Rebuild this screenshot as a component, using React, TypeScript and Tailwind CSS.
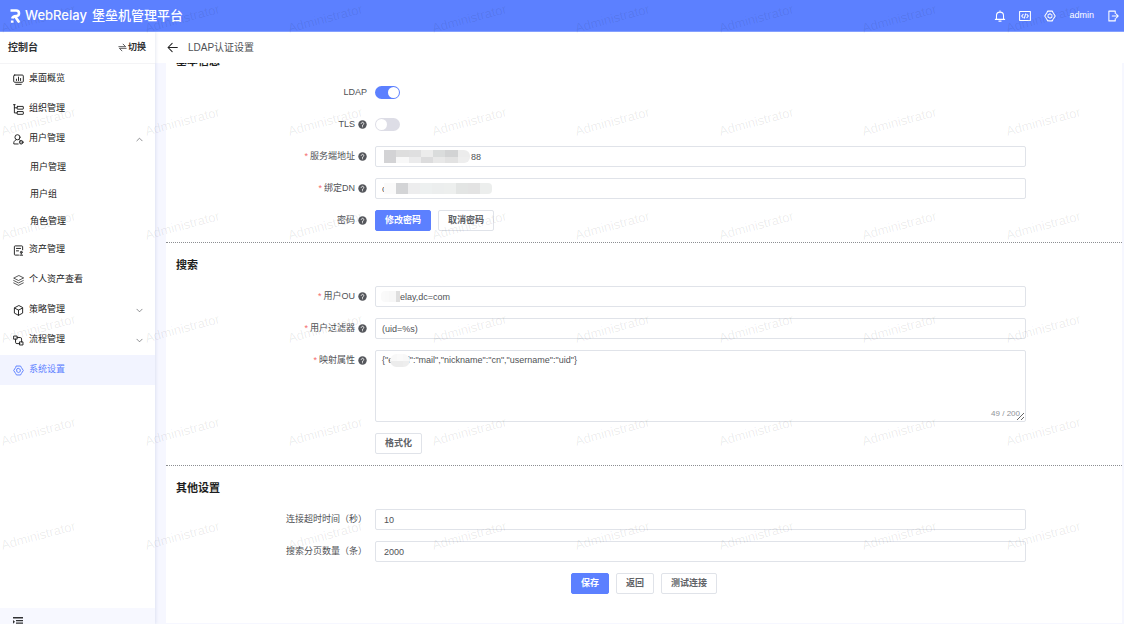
import { useState, type ReactNode } from "react";
import clsx from "clsx";

const Icon = ({ children, className = "size-[11px]" }: { children: ReactNode; className?: string }) => (
  <svg
    viewBox="0 0 16 16"
    fill="none"
    stroke="currentColor"
    strokeWidth="1.4"
    strokeLinecap="round"
    strokeLinejoin="round"
    className={clsx("shrink-0", className)}
    aria-hidden="true"
  >
    {children}
  </svg>
);

const icons = {
  desktop: (
    <Icon>
      <rect x="1" y="1.5" width="14" height="10.5" rx="1.5" />
      <path d="M4 15h8M5 9.5V7.5M8 9.5V4.5M11 9.5V6.5" />
    </Icon>
  ),
  org: (
    <Icon>
      <path d="M2 1v12h4M0.800 1h2.400M2 5.500h4" />
      <rect x="6" y="3.500" width="9" height="4" rx="0.500" />
      <rect x="6" y="11" width="9" height="4" rx="0.500" />
    </Icon>
  ),
  user: (
    <Icon>
      <path d="M7.500 14.500H1.200c-.6-3 1-5.300 3.600-6.200M8.500 8.200c.8.2 1.500.5 2 1" />
      <circle cx="6.500" cy="4.700" r="3.700" />
      <circle cx="12" cy="12" r="2.600" fill="currentColor" fillOpacity="0.400" />
    </Icon>
  ),
  asset: (
    <Icon>
      <path d="M14 7V2.500a1.200 1.200 0 0 0-1.200-1.200H3.200A1.200 1.200 0 0 0 2 2.500v11a1.200 1.200 0 0 0 1.200 1.200H8M5 5h6M5 8.500h3" />
      <circle cx="12" cy="10.500" r="1.300" />
      <path d="M12 12v1.500M10 14.800h4" />
    </Icon>
  ),
  layers: (
    <Icon>
      <path d="M8 1 1 4.500 8 8l7-3.500zM1 8l7 3.500L15 8M1 11.500 8 15l7-3.500" strokeWidth="1.100" />
    </Icon>
  ),
  box: (
    <Icon>
      <path d="M8 1 2 4.200v7.600L8 15l6-3.200V4.200zM2.200 4.400 8 7.500l5.800-3.100M8 7.500V15" />
    </Icon>
  ),
  flow: (
    <Icon>
      <rect x="1.500" y="1.500" width="4.500" height="4.500" />
      <rect x="10" y="10" width="4.500" height="4.500" />
      <path d="M6 3.700h4.500a2 2 0 0 1 2 2V10M3.700 6v4.500a2 2 0 0 0 2 2H10" />
    </Icon>
  ),
  setting: (
    <Icon>
      <path d="M5 1.500h6l1.200 2.200L15 8l-2.800 4.300L11 14.500H5l-1.200-2.200L1 8l2.800-4.300z" />
      <path d="M8 5 10.600 6.500v3L8 11 5.400 9.500v-3z" />
    </Icon>
  ),
  bell: (
    <Icon className="size-3">
      <path d="M1.800 12.500h12.400M3.300 12.300V7.500a4.700 4.700 0 0 1 9.400 0v4.800M8 1v1.500M6.500 14.800h3" />
    </Icon>
  ),
  code: (
    <Icon className="size-3">
      <rect x="0.800" y="2" width="14.400" height="12" />
      <path d="M5.500 5.800 3.500 8l2 2.200M10.500 5.800l2 2.200-2 2.200M8.800 5.200l-1.600 5.600" />
    </Icon>
  ),
  logout: (
    <Icon className="size-3">
      <path d="M11 4.500V1.500H2.500v13H11v-3M7 8h8M12.500 5.500 15 8l-2.500 2.500" />
    </Icon>
  ),
};

type MenuItem = { label: string; icon: ReactNode; children?: string[]; arrow?: boolean; active?: boolean };

const menu: MenuItem[] = [
  { label: "桌面概览", icon: icons.desktop },
  { label: "组织管理", icon: icons.org },
  { label: "用户管理", icon: icons.user, arrow: true, children: ["用户管理", "用户组", "角色管理"] },
  { label: "资产管理", icon: icons.asset },
  { label: "个人资产查看", icon: icons.layers },
  { label: "策略管理", icon: icons.box, arrow: true },
  { label: "流程管理", icon: icons.flow, arrow: true },
  { label: "系统设置", icon: icons.setting, active: true },
];

const Header = () => (
  <header className="flex h-8 shrink-0 items-center border-b border-[#84a0ff] bg-[#5c80ff] pr-[5px] pl-[10px] text-white">
    <svg viewBox="0 0 11 14" className="h-[14px] w-[11px]" fill="none" stroke="white" strokeWidth="2.600" aria-hidden="true">
      <path d="M0.500 1.500H6.200a2.800 2.800 0 0 1 0 5.600C4 7.200 2.600 8 2.200 9.500" />
      <path d="M5.200 7.500 9.300 13.600M2.200 11.500v2.300" />
    </svg>
    <span className="ml-1 font-[Inter] text-[13px] font-medium">WebRelay</span>
    <h1 className="ml-[5px] text-[13px] font-medium">堡垒机管理平台</h1>
    <div className="ml-auto flex items-center gap-[13px]">
      <button aria-label="通知">{icons.bell}</button>
      <button aria-label="接口">{icons.code}</button>
      <button aria-label="设置" className="*:size-3">{icons.setting}</button>
      <span className="text-[9px]">admin</span>
      <button aria-label="退出">{icons.logout}</button>
    </div>
  </header>
);

const Sidebar = () => (
  <aside className="z-10 flex w-[155px] shrink-0 flex-col bg-white shadow-[1px_0_3px_rgba(60,80,160,0.12)]">
    <div className="flex h-8 shrink-0 items-center justify-between border-b border-[#f4f4f6] pr-[9px] pl-2">
      <span className="text-[10px] font-semibold text-[#303133]">控制台</span>
      <button className="flex items-center gap-px text-[9px] font-semibold text-[#303133]">
        <Icon className="size-[9px]">
          <path d="M1.500 6.500h12L9 2M14.500 9.500h-12L7 14" />
        </Icon>
        切换
      </button>
    </div>
    <nav className="flex-1 text-[9px] text-[#222]">
      <ul>
        {menu.map((item) => (
          <li key={item.label}>
            <a
              href="#"
              className={clsx(
                "flex h-[30px] items-center gap-[5px] pr-3 pl-[13px]",
                item.active && "bg-[#f2f4ff] text-[#5c80ff]",
              )}
            >
              {item.icon}
              <span>{item.label}</span>
              {item.arrow && (
                <Icon className="ml-auto size-[7px] text-[#606266]">
                  <path d={item.children ? "M2 11l6-6 6 6" : "M2 5l6 6 6-6"} strokeWidth="1.600" />
                </Icon>
              )}
            </a>
            {item.children && (
              <ul>
                {item.children.map((child) => (
                  <li key={child}>
                    <a href="#" className="flex h-[27px] items-center pl-[30px]">
                      {child}
                    </a>
                  </li>
                ))}
              </ul>
            )}
          </li>
        ))}
      </ul>
    </nav>
    <div className="h-4 shrink-0 overflow-hidden bg-[#f7f8ff] pt-2 pl-[13px]">
      <button aria-label="收起菜单" className="block">
        <svg viewBox="0 0 10 10" className="size-[10px]" fill="#303133" aria-hidden="true">
          <path d="M0 1h10v1.500H0zM3 4h7v1.200H3zM3 6.500h7v1.200H3zM0 9h10v1H0zM0 4l2 1.800L0 7.700z" />
        </svg>
      </button>
    </div>
  </aside>
);

const Button = ({ children, primary }: { children: ReactNode; primary?: boolean }) => (
  <button
    type="button"
    className={clsx(
      "h-[21px] rounded-[2px] border px-[9px] text-[9px] font-semibold",
      primary ? "border-[#5c80ff] bg-[#5c80ff] text-white" : "border-[#e0e3e9] bg-white text-[#606266]",
    )}
  >
    {children}
  </button>
);

const Help = () => (
  <svg viewBox="0 0 16 16" className="size-[9px]" aria-hidden="true">
    <circle cx="8" cy="8" r="7.500" fill="#55575c" />
    <path d="M5.700 6.300a2.300 2.300 0 1 1 3.500 2C8.300 8.800 8 9.100 8 10M8 11.800v.4" fill="none" stroke="white" strokeWidth="1.500" strokeLinecap="round" />
  </svg>
);

type RowProps = { label?: string; id?: string; required?: boolean; help?: boolean; children: ReactNode };

const Row = ({ label, id, required, help, children }: RowProps) => (
  <div className="flex items-start gap-2">
    <div className="flex h-[21px] w-[201px] shrink-0 items-center justify-end gap-[3px] text-[9px] text-[#505256]">
      {label && (
        <label htmlFor={id}>
          {required && <span className="mr-[2px] text-[#f56c6c]">*</span>}
          {label}
        </label>
      )}
      {help && <Help />}
    </div>
    <div className="relative flex min-h-[21px] min-w-0 flex-1 items-center gap-[7px]">{children}</div>
  </div>
);

const Toggle = ({ id, initial = false }: { id: string; initial?: boolean }) => {
  const [on, setOn] = useState(initial);
  return (
    <input
      id={id}
      type="checkbox"
      role="switch"
      checked={on}
      onChange={(e) => setOn(e.target.checked)}
      className="h-[13px] w-[25px] appearance-none rounded-full bg-[#dddde6] p-px before:block before:size-[11px] before:rounded-full before:bg-white checked:bg-[#5c80ff] checked:before:ml-3"
    />
  );
};

const TextField = ({ id, value, className = "px-[6px]" }: { id: string; value: string; className?: string }) => (
  <input
    id={id}
    type="text"
    defaultValue={value}
    className={clsx("h-[21px] w-full rounded-[2px] border border-[#e0e3e9] bg-white text-[9px] text-[#505256] outline-none", className)}
  />
);

const Mask = ({ rows, className }: { rows: string[][]; className: string }) => (
  <div className={clsx("absolute flex flex-col overflow-hidden", className)} aria-hidden="true">
    {rows.map((colors, r) => (
      <div key={r} className="flex flex-1">
        {colors.map((color, i) => (
          <span key={i} className="flex-1" style={{ background: color }} />
        ))}
      </div>
    ))}
  </div>
);

const Section = ({ title, children, divided }: { title: string; children: ReactNode; divided?: boolean }) => (
  <section className={clsx("pt-3 pb-[11px]", divided && "border-b border-dotted border-[#8c8e92]")}>
    <h2 className="mb-[11px] h-5 pl-[10px] text-[11px] leading-5 font-bold text-[#1d1e20]">{title}</h2>
    <div className="flex flex-col gap-[11px] pr-24">{children}</div>
  </section>
);

const Watermark = () => (
  <div className="pointer-events-none absolute inset-0 z-20 overflow-hidden" aria-hidden="true">
    <div className="-mt-[33px] grid h-[620px] w-[1148px] grid-cols-8 grid-rows-6">
      {Array.from({ length: 48 }, (_, i) => (
        <span key={i} className="flex items-center text-[13px] text-black/8">
          <span className="-rotate-[15deg]">Administrator</span>
        </span>
      ))}
    </div>
  </div>
);

const App = () => {
  return (
    <div className="relative flex h-screen flex-col overflow-hidden bg-[#f6f7ff] font-['Liberation_Sans','Noto_Sans_CJK_SC',sans-serif]">
      <Header />
      <div className="flex min-h-0 flex-1">
        <Sidebar />
        <main className="flex min-w-0 flex-1 flex-col">
          <div className="flex h-[31px] shrink-0 items-center gap-[10px] bg-white pl-3">
            <button aria-label="返回上一页">
              <Icon className="size-[11px] text-[#222]">
                <path d="M15 8H1.500M7.500 2l-6 6 6 6" strokeWidth="1.500" />
              </Icon>
            </button>
            <span className="text-[10px] text-[#505256]">LDAP认证设置</span>
          </div>
          <div className="mr-[2px] mb-px ml-[11px] flex-1 overflow-hidden bg-white">
            <form className="-mt-6">
              <Section title="基本信息" divided>
                <Row label="LDAP" id="ldap">
                  <Toggle id="ldap" initial />
                </Row>
                <Row label="TLS" id="tls" help>
                  <Toggle id="tls" />
                </Row>
                <Row label="服务端地址" id="server" required help>
                  <TextField id="server" value="88" className="pr-[6px] pl-[95px]" />
                  <Mask
                    className="top-1 left-[9px] h-[13px] w-[86px] rounded-r-md"
                    rows={[
                      ["#d3d3d5", "#dedede", "#dfdfe0", "#ececec", "#dadcdc", "#d2d3d4", "#ececec"],
                      ["#d3d3d5", "#f8f8f8", "#ebebec", "#dcdcdd", "#e8e8e8", "#e2e2e2", "#eeeeee"],
                    ]}
                  />
                </Row>
                <Row label="绑定DN" id="dn" required help>
                  <TextField id="dn" value="c" />
                  <Mask
                    className="top-[5px] left-[9px] h-[11px] w-[108px] rounded-r-sm"
                    rows={[["#fafafa", "#d3d4d6", "#ededee", "#edf0f0", "#eceeee", "#edefee", "#e3e5e4", "#e3e3e3", "#eceeed"]]}
                  />
                </Row>
                <Row label="密码" help>
                  <Button primary>修改密码</Button>
                  <Button>取消密码</Button>
                </Row>
              </Section>

              <Section title="搜索" divided>
                <Row label="用户OU" id="ou" required help>
                  <TextField id="ou" value="elay,dc=com" className="pr-[6px] pl-6" />
                  <Mask
                    className="top-[5px] left-[6px] h-[11px] w-[19px] rounded-l-sm"
                    rows={[["#fafafa", "#f9f9f9", "#f7f7f7", "#f7f7f7", "#dedede"]]}
                  />
                </Row>
                <Row label="用户过滤器" id="filter" required help>
                  <TextField id="filter" value="(uid=%s)" />
                </Row>
                <Row label="映射属性" id="mapping" required help>
                  <textarea
                    id="mapping"
                    maxLength={200}
                    defaultValue={'{"email":"mail","nickname":"cn","username":"uid"}'}
                    className="block h-[72px] w-full resize-y rounded-[2px] border border-[#e0e3e9] bg-white px-[6px] py-[3px] text-[9px] leading-3 text-[#505256] outline-none"
                  />
                  <Mask
                    className="top-1 left-[15px] h-[13px] w-5 rounded-full"
                    rows={[["#f8f8f8", "#fafafa", "#f8f8f8"], ["#ececec", "#ececec", "#eeeeee"]]}
                  />
                  <span className="absolute right-[6px] bottom-[2px] text-[8px] text-[#909399]">49 / 200</span>
                </Row>
                <Row>
                  <Button>格式化</Button>
                </Row>
              </Section>

              <Section title="其他设置">
                <Row label="连接超时时间（秒）" id="timeout">
                  <TextField id="timeout" value="10" className="px-2" />
                </Row>
                <Row label="搜索分页数量（条）" id="page-size">
                  <TextField id="page-size" value="2000" className="px-2" />
                </Row>
              </Section>
              <div className="flex justify-center gap-[7px]">
                <Button primary>保存</Button>
                <Button>返回</Button>
                <Button>测试连接</Button>
              </div>
            </form>
          </div>
        </main>
      </div>
      <Watermark />
    </div>
  );
};

export default App;
